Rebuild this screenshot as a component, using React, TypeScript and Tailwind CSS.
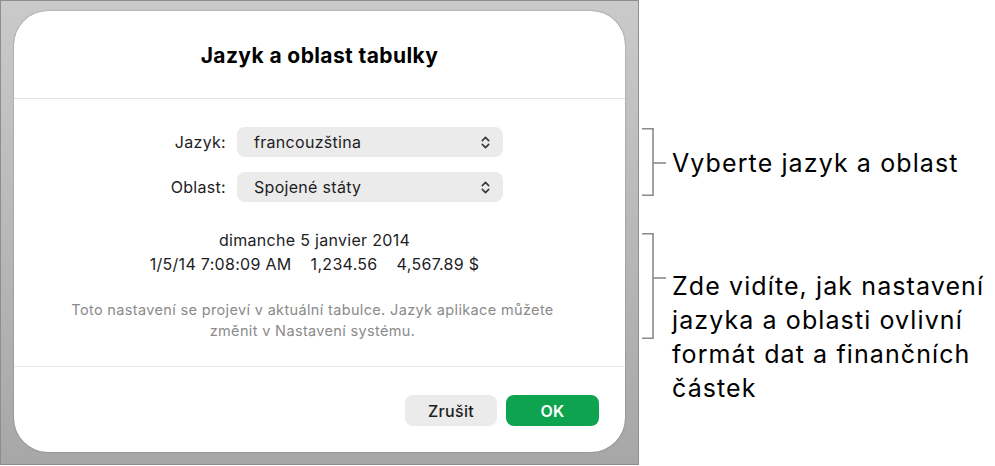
import React from "react";

const font = { fontFamily: "Inter, 'Noto Sans', sans-serif" };

function UpDown() {
  return (
    <svg width="9" height="13" viewBox="0 0 9 13" fill="none" stroke="#3a3a3a" strokeWidth="1.6" strokeLinecap="round" strokeLinejoin="round">
      <path d="M1.3 4.6 4.5 1.4 7.7 4.6" />
      <path d="M1.3 8.4 4.5 11.6 7.7 8.4" />
    </svg>
  );
}

function SelectRow({ label, value }: { label: string; value: string }) {
  return (
    <div className="flex items-center gap-[11px]">
      <div className="w-[212px] text-right text-[16px] tracking-[0.3px] text-[#1d1d1f]">{label}</div>
      <div className="flex h-[30px] w-[266px] items-center justify-between rounded-[8px] bg-[#ebebeb] pl-[17px] pr-[13px]">
        <span className="text-[16px] tracking-[0.3px] text-[#1d1d1f]">{value}</span>
        <UpDown />
      </div>
    </div>
  );
}

function Bracket({ height, tick }: { height: number; tick: number }) {
  return (
    <svg width="24" height={height} viewBox={`0 0 24 ${height}`} fill="none" stroke="#8a8a8a" strokeWidth="1.6" className="shrink-0">
      <path d={`M0 0.8 H11 V${height - 0.8} H0`} />
      <path d={`M11 ${tick} H24`} />
    </svg>
  );
}

export default function App() {
  return (
    <div className="flex h-[466px] w-[995px] bg-white" style={font}>
      {/* screenshot frame with the dialog */}
      <div className="h-[465px] w-[639px] shrink-0 border border-[#8e8e8e] bg-gradient-to-b from-[#cacaca] to-[#a7a7a7] pl-[13px] pt-[10px]">
        <div className="flex h-[441px] w-[611px] flex-col rounded-[34px] bg-white shadow-[0_0_1.5px_rgba(0,0,0,0.45)]">
          <div className="flex h-[87px] items-center justify-center pt-[2px] text-[21px] font-bold tracking-[0.4px] text-black">
            Jazyk a oblast tabulky
          </div>
          <div className="h-px bg-[#e3e3e3]" />
          <div className="flex flex-col pt-[28px]">
            <div className="flex flex-col gap-[15px]">
              <SelectRow label="Jazyk:" value="francouzština" />
              <SelectRow label="Oblast:" value="Spojené státy" />
            </div>
            <div className="mt-[26px] flex flex-col items-center pr-[10px] text-[16px] leading-[24px] tracking-[0.3px] text-[#1d1d1f]">
              <div>dimanche 5 janvier 2014</div>
              <div className="flex gap-[19px]">
                <span>1/5/14 7:08:09 AM</span>
                <span>1,234.56</span>
                <span>4,567.89 $</span>
              </div>
            </div>
            <div className="mt-[23px] pr-[14px] text-center text-[14.5px] leading-[21px] tracking-[0.35px] text-[#8a8a8a]">
              Toto nastavení se projeví v aktuální tabulce. Jazyk aplikace můžete
              <br />
              změnit v Nastavení systému.
            </div>
          </div>
          <div className="mt-auto h-px bg-[#e8e8e8]" />
          <div className="flex justify-end gap-[9px] pb-[26px] pr-[26px] pt-[28px]">
            <button className="h-[31px] w-[92px] rounded-[8px] bg-[#ebebeb] text-[16px] font-medium tracking-[0.3px] text-[#1d1d1f]">
              Zrušit
            </button>
            <button className="h-[31px] w-[93px] rounded-[8px] bg-[#0da34f] text-[16px] font-semibold tracking-[0.3px] text-white">
              OK
            </button>
          </div>
        </div>
      </div>

      {/* callouts */}
      <div className="flex flex-col pl-[3px] pt-[128px] text-[25px] leading-[34px] tracking-[1.1px] text-black">
        <div className="flex items-start">
          <Bracket height={68} tick={35} />
          <div className="ml-[6px] whitespace-nowrap pt-[18px]">Vyberte jazyk a oblast</div>
        </div>
        <div className="mt-[37px] flex items-start">
          <Bracket height={106} tick={45} />
          <div className="ml-[6px] whitespace-nowrap pt-[36px]">
            Zde vidíte, jak nastavení
            <br />
            jazyka a oblasti ovlivní
            <br />
            formát dat a finančních
            <br />
            částek
          </div>
        </div>
      </div>
    </div>
  );
}
